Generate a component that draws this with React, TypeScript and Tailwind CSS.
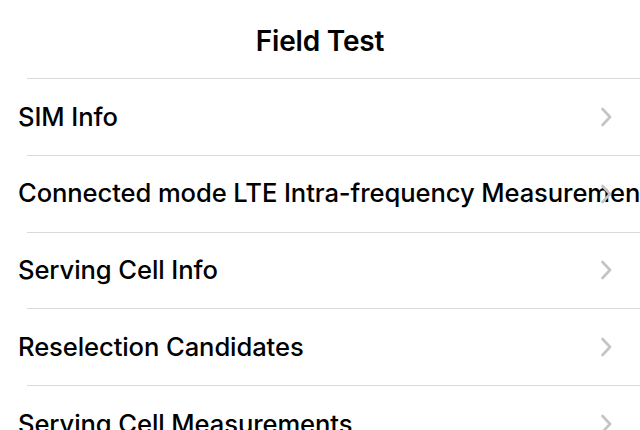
const ROWS = [
  "SIM Info",
  "Connected mode LTE Intra-frequency Measurement",
  "Serving Cell Info",
  "Reselection Candidates",
  "Serving Cell Measurements",
];

function Chevron() {
  return (
    <svg width="12" height="20" viewBox="0 0 12 20" className="shrink-0">
      <path d="M2.5 2 L10 10 L2.5 18" fill="none" stroke="#c4c4c7" strokeWidth="2.6" strokeLinecap="round" strokeLinejoin="round" />
    </svg>
  );
}

export default function App() {
  return (
    <div className="h-[430px] w-[640px] overflow-hidden bg-white text-black" style={{ fontFamily: "Inter, 'Noto Sans', sans-serif" }}>
      <header className="flex h-[78px] items-center justify-center pt-[4px]">
        <h1 className="text-[28px] font-semibold tracking-[-0.2px]">Field Test</h1>
      </header>
      <ul>
        {ROWS.map((label) => (
          <li key={label} className="relative">
            <div className="ml-[27px] h-px bg-[#d9d9dc]" />
            <div className="relative flex h-[75.75px] items-center pl-[18px]">
              <span className="whitespace-nowrap text-[25.6px] font-medium tracking-[-0.1px]">{label}</span>
              <div className="absolute right-[28px] top-1/2 -translate-y-1/2">
                <Chevron />
              </div>
            </div>
          </li>
        ))}
      </ul>
    </div>
  );
}
